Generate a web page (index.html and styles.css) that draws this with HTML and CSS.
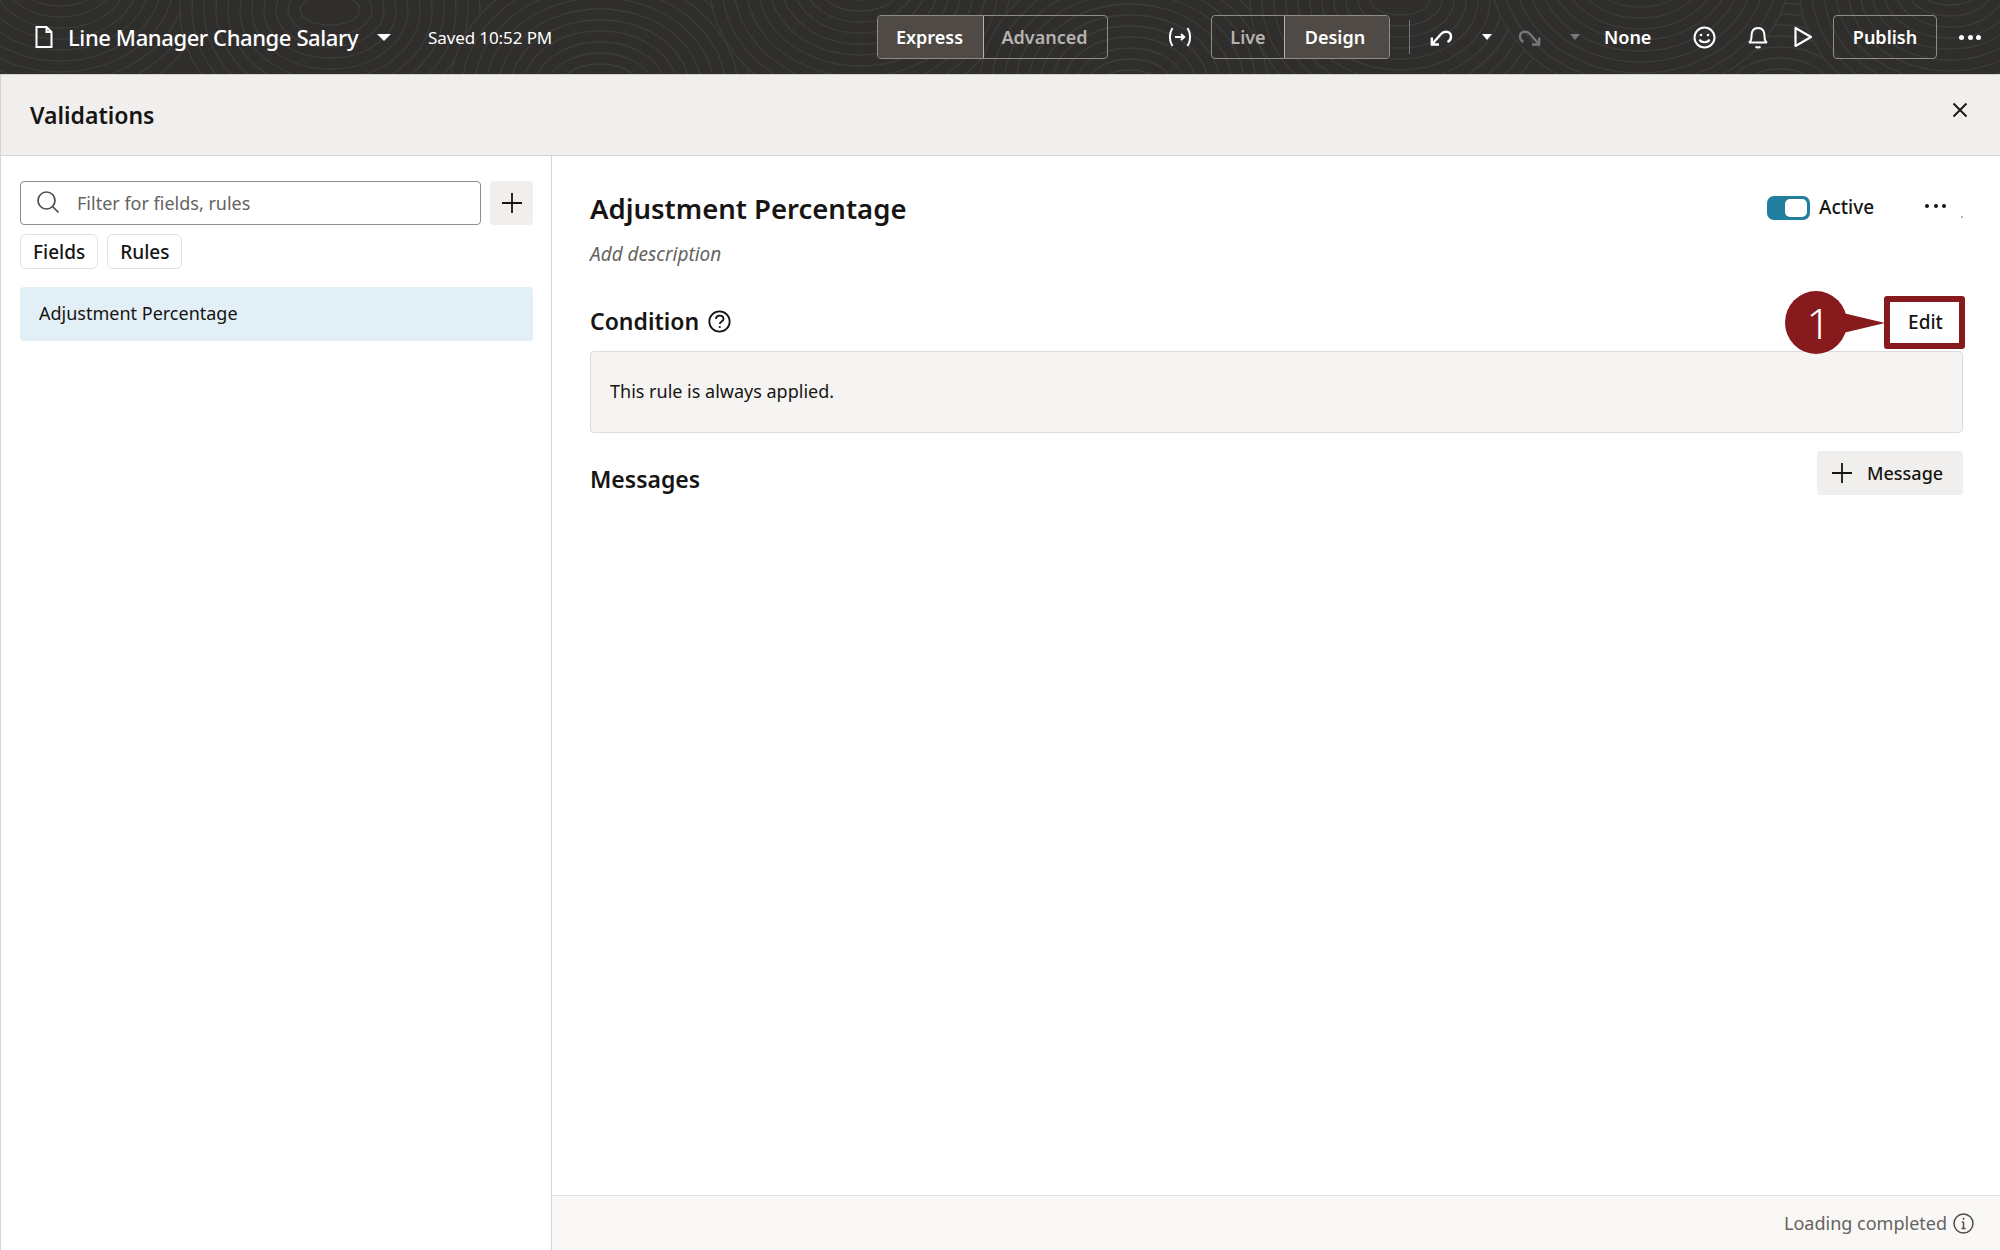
FILE: index.html
```html
<!DOCTYPE html>
<html lang="en">
<head>
  <meta charset="UTF-8" />
  <title>Line Manager Change Salary - Validations</title>
  <link rel="stylesheet" href="styles.css">
</head>
<body>
  <header class="topbar">
    <svg class="topbar-bg" width="2000" height="74" aria-hidden="true">
      <defs>
        <g id="whorl" fill="#2f2e2c" stroke="#3d3c3a" stroke-width="1.300">
          <ellipse rx="150" ry="125"/><ellipse rx="138" ry="114"/><ellipse rx="126" ry="103"/><ellipse rx="114" ry="92"/>
          <ellipse rx="102" ry="81"/><ellipse rx="90" ry="70"/><ellipse rx="78" ry="59"/><ellipse rx="66" ry="48"/>
          <ellipse rx="54" ry="37"/><ellipse rx="42" ry="26"/><ellipse rx="30" ry="15"/>
        </g>
      </defs>
      <use href="#whorl" x="60" y="-20"/>
      <use href="#whorl" x="1780" y="95"/>
      <use href="#whorl" x="330" y="10"/>
      <use href="#whorl" x="600" y="90"/>
      <use href="#whorl" x="860" y="-15"/>
      <use href="#whorl" x="1130" y="85"/>
      <use href="#whorl" x="1400" y="0"/>
      <use href="#whorl" x="1640" y="-30"/>
      <use href="#whorl" x="1950" y="-10"/>
    </svg>

    <svg class="doc-icon" width="18" height="22" viewBox="0 0 18 22" fill="none" stroke="#fff" stroke-width="2"><path d="M1.500 1h10l5 5v15h-15zM11.500 1v5h5"/></svg>
    <span class="app-title">Line Manager Change Salary</span>
    <span class="caret title-caret"></span>
    <span class="saved">Saved 10:52 PM</span>

    <div class="seg seg-mode">
      <span class="seg-item on w-express">Express</span>
      <span class="seg-item w-advanced">Advanced</span>
    </div>

    <svg class="var-icon" width="24" height="22" viewBox="0 0 24 22" fill="none" stroke="#fff" stroke-width="2"><path d="M4.500 2C1 7 1 15 4.500 20M19.500 2c3.500 5 3.500 13 0 18M7 11h9M13 8l3.200 3-3.200 3"/></svg>

    <div class="seg seg-view">
      <span class="seg-item w-live">Live</span>
      <span class="seg-item on w-design">Design</span>
    </div>

    <span class="divider"></span>

    <svg class="undo-icon" width="23" height="17" viewBox="0 0 23 17" fill="none" stroke="#fff" stroke-width="2.400"><path d="M9 15.500H1.800V8.500M1.800 15.500L11 5c3.500-3.800 10-2.500 10 2.500 0 2.500-1.500 4.500-3.500 5.500"/></svg>
    <span class="caret undo-caret"></span>
    <svg class="redo-icon" width="23" height="17" viewBox="0 0 23 17" fill="none" stroke="#77767a" stroke-width="2.400"><path d="M14 15.500h7.200V8.500M21.200 15.500L12 5C8.500 1.200 2 2.500 2 7.500c0 2.500 1.500 4.500 3.500 5.500"/></svg>
    <span class="caret redo-caret"></span>

    <span class="none-label">None</span>

    <svg class="smile-icon" width="23" height="23" viewBox="0 0 23 23" fill="none" stroke="#fff" stroke-width="2"><circle cx="11.500" cy="11.500" r="10"/><path d="M6.500 13.500c1.500 3.500 8.500 3.500 10 0"/><circle cx="8" cy="9" r="1.300" fill="#fff" stroke="none"/><circle cx="15" cy="9" r="1.300" fill="#fff" stroke="none"/></svg>
    <svg class="bell-icon" width="20" height="23" viewBox="0 0 20 23" fill="none" stroke="#fff" stroke-width="2"><path d="M1 16.500c2-1 2.500-3 2.500-6.500 0-5 2.500-8 6.500-8s6.500 3 6.500 8c0 3.500.5 5.500 2.500 6.500zM7.500 20.500c1.500 1.200 3.500 1.200 5 0"/></svg>
    <svg class="play-icon" width="19" height="22" viewBox="0 0 19 22" fill="none" stroke="#fff" stroke-width="2.200"><path d="M1.500 2v18L17 11z" stroke-linejoin="round"/></svg>

    <span class="publish">Publish</span>
    <span class="dots dots-light"><i></i><i></i><i></i></span>
  </header>

  <div class="subheader">
    <h1>Validations</h1>
    <svg class="close-icon" width="16" height="16" viewBox="0 0 16 16" stroke="#161513" stroke-width="1.800"><path d="M1.500 1.500l13 13M14.500 1.500l-13 13"/></svg>
  </div>

  <div class="content">
    <aside class="sidebar">
      <div class="search-row">
        <div class="search">
          <svg width="24" height="24" viewBox="0 0 24 24" fill="none" stroke="#4f4d4a" stroke-width="1.700"><circle cx="10.500" cy="10.500" r="8.500"/><path d="M16.500 16.500l6 6"/></svg>
          <span>Filter for fields, rules</span>
        </div>
        <span class="add-btn">
          <svg width="22" height="22" viewBox="0 0 22 22" stroke="#161513" stroke-width="1.800"><path d="M11 1v20M1 11h20"/></svg>
        </span>
      </div>
      <div class="chips">
        <span class="chip">Fields</span>
        <span class="chip">Rules</span>
      </div>
      <div class="rule-item">Adjustment Percentage</div>
    </aside>

    <main class="detail">
      <div class="detail-body">
        <div class="title-row">
          <h2>Adjustment Percentage</h2>
          <span class="toggle"><i></i></span>
          <span class="active-label">Active</span>
          <span class="dots"><i></i><i></i><i></i></span>
        </div>
        <p class="add-desc">Add description</p>

        <div class="condition-row">
          <h3>Condition</h3>
          <svg class="help-icon" width="23" height="23" viewBox="0 0 23 23" fill="none" stroke="#161513" stroke-width="1.800"><circle cx="11.500" cy="11.500" r="10.200"/><path d="M8 9c0-4.500 7.500-4.500 7.500 0 0 2.500-3.700 2.500-3.700 5"/><circle cx="11.800" cy="17" r="1.100" fill="#161513" stroke="none"/></svg>
          <span class="edit-btn">Edit</span>
          <span class="callout">
            <span class="callout-num">1</span>
            <svg class="callout-tail" width="42" height="24" viewBox="0 0 42 24"><path d="M0 2l42 10-42 10z" fill="#861a1c"/></svg>
          </span>
        </div>

        <div class="condition-box">This rule is always applied.</div>

        <div class="messages-row">
          <h3>Messages</h3>
          <span class="message-btn">
            <svg width="22" height="22" viewBox="0 0 22 22" stroke="#161513" stroke-width="1.800"><path d="M11 1v20M1 11h20"/></svg>
            Message
          </span>
        </div>
      </div>

      <footer class="status">
        <span>Loading completed</span>
        <svg width="21" height="21" viewBox="0 0 21 21" fill="none" stroke="#4f4d4a" stroke-width="1.500"><circle cx="10.500" cy="10.500" r="9.500"/><path d="M10.500 9v6.500M8.500 15.500h4M8.800 9h1.700"/><circle cx="10.500" cy="5.800" r="1" fill="#4f4d4a" stroke="none"/></svg>
      </footer>
    </main>
  </div>
</body>
</html>
```

FILE: styles.css
```css
* { box-sizing: border-box; }
html, body { margin: 0; height: 100%; }
body { width: 2000px; height: 1250px; display: flex; flex-direction: column; overflow: hidden; background: #fff; color: #161513; font-family: "Noto Sans", "Open Sans", sans-serif; }
h1, h2, h3, p { margin: 0; }

/* top bar */
.topbar { position: relative; flex: none; height: 75px; display: flex; align-items: center; padding-left: 34px; background: #2f2e2c; border-bottom: 1px solid #d6d4d1; color: #fff; overflow: hidden; }
.topbar > * { position: relative; flex: none; }
.topbar > .topbar-bg { position: absolute; left: 0; top: 0; }
.doc-icon { margin-left: 1px; }
.app-title { margin-left: 15px; width: 292px; font-size: 22px; font-weight: 500; letter-spacing: -0.4px; white-space: nowrap; }
.caret { width: 0; height: 0; border-left: 5.500px solid transparent; border-right: 5.500px solid transparent; border-top: 6px solid #fff; }
.title-caret { margin-left: 17px; border-left-width: 7px; border-right-width: 7px; border-top-width: 7px; }
.saved { margin-left: 37px; width: 126px; font-size: 17px; letter-spacing: -0.1px; white-space: nowrap; }
.seg { display: flex; height: 44px; border: 1px solid #8f8d89; border-radius: 4px; overflow: hidden; font-size: 18px; font-weight: 600; color: #b5b3af; }
.seg-item { display: flex; align-items: center; justify-content: center; }
.seg-item.on { background: #4f4a45; color: #fff; }
.seg-mode { margin-left: 323px; width: 231px; }
.seg-mode .on { border-right: 1px solid #b5b3af; }
.w-express { width: 106px; padding-right: 2px; }
.w-advanced { width: 123px; padding-right: 2px; }
.var-icon { margin-left: 60px; }
.seg-view { margin-left: 19px; width: 179px; }
.seg-view .on { border-left: 1px solid #b5b3af; }
.w-live { width: 72px; }
.w-design { width: 105px; padding-right: 4px; }
.divider { margin-left: 19px; width: 1px; height: 34px; background: #77767a; }
.undo-icon { margin-left: 20px; }
.undo-caret { margin-left: 29px; }
.redo-icon { margin-left: 26px; }
.redo-caret { margin-left: 29px; border-top-color: #77767a; }
.none-label { margin-left: 24px; width: 48px; font-size: 18px; font-weight: 600; }
.smile-icon { margin-left: 41px; }
.bell-icon { margin-left: 32px; }
.play-icon { margin-left: 26px; }
.publish { margin-left: 20px; width: 104px; height: 44px; display: flex; align-items: center; justify-content: center; border: 1px solid #8f8d89; border-radius: 4px; font-size: 18px; font-weight: 600; }
.dots { display: flex; gap: 4.500px; }
.dots i { width: 4px; height: 4px; border-radius: 50%; background: #161513; }
.dots-light { margin-left: 22px; gap: 3.500px; }
.dots-light i { width: 5px; height: 5px; background: #fff; }

/* validations header */
.subheader { flex: none; height: 81px; display: flex; align-items: center; justify-content: space-between; padding: 0 33px 10px 29px; background: #f1efed; border: solid #d6d4d1; border-width: 0 0 1px 1px; }
.subheader h1 { font-size: 23px; font-weight: 600; padding-top: 10px; }
.close-icon { margin-bottom: 1px; margin-right: -1px; }

.content { flex: 1; display: flex; min-height: 0; }

/* left list */
.sidebar { flex: none; width: 552px; padding: 25px 18px 0 19px; border: solid #d6d4d1; border-width: 0 1px 0 1px; }
.search-row { display: flex; gap: 9px; }
.search { width: 462px; height: 44px; display: flex; align-items: center; gap: 17px; padding-left: 15px; border: 1px solid #8f8d89; border-radius: 4px; font-size: 18px; color: #65635f; }
.search svg { margin-top: -3px; }
.add-btn { width: 43px; height: 44px; display: flex; align-items: center; justify-content: center; background: #f1efed; border-radius: 4px; }
.chips { display: flex; gap: 9px; margin-top: 9px; }
.chip { height: 35px; padding: 0 12px; display: flex; align-items: center; border: 1px solid #e4e2df; border-radius: 6px; font-size: 19px; font-weight: 500; }
.rule-item { margin-top: 18px; height: 54px; display: flex; align-items: center; padding-left: 19px; padding-bottom: 2px; background: #e3eff6; border-radius: 4px; font-size: 18px; }

/* right detail */
.detail { flex: 1; display: flex; flex-direction: column; min-width: 0; }
.detail-body { flex: 1; padding: 31px 37px 0 38px; }
.title-row { position: relative; display: flex; align-items: center; height: 44px; }
.title-row::after { content: ""; position: absolute; right: 0; top: 29px; width: 2px; height: 2px; background: #b5b3af; }
.title-row h2 { font-size: 27.500px; font-weight: 600; flex: 1; margin-top: -2px; }
.toggle { width: 43px; height: 24px; padding: 3px; display: flex; justify-content: flex-end; background: #227e9e; border-radius: 7px; margin-top: -3px; }
.toggle i { width: 22px; height: 18px; background: #fff; border-radius: 5px; }
.active-label { margin-left: 9px; width: 106px; font-size: 19px; font-weight: 500; margin-top: -4px; }
.title-row .dots { margin-right: 17px; margin-top: -6px; }
.add-desc { margin-top: 10px; font-size: 19px; font-style: italic; color: #65635f; }
.condition-row { position: relative; display: flex; align-items: center; gap: 9px; margin-top: 35px; height: 38px; }
.condition-row h3, .messages-row h3 { font-size: 23px; font-weight: 600; }
.edit-btn { position: absolute; right: -2px; top: -6px; width: 81px; height: 53px; display: flex; align-items: center; justify-content: center; padding: 0 0 2px 2px; background: #fff; border: 6px solid #861a1c; border-radius: 3px; font-size: 19px; font-weight: 500; }
.callout { position: absolute; right: 78px; top: -11px; display: flex; align-items: center; }
.callout-num { width: 62px; height: 63px; display: flex; align-items: center; justify-content: center; padding-left: 5px; background: #861a1c; border-radius: 50%; color: #fff; font-size: 42px; font-weight: 300; }
.callout-tail { margin-left: -4px; }
.condition-box { margin-top: 11px; height: 82px; display: flex; align-items: center; padding: 0 0 2px 19px; background: #f5f4f2; border: 1px solid #dedcd9; border-radius: 4px; font-size: 18px; }
.messages-row { display: flex; align-items: center; justify-content: space-between; margin-top: 18px; height: 44px; }
.messages-row h3 { padding-top: 11px; }
.message-btn { display: flex; align-items: center; gap: 14px; width: 146px; height: 44px; padding-left: 14px; background: #f1efed; border-radius: 4px; font-size: 18px; font-weight: 500; }
.status { flex: none; height: 55px; display: flex; align-items: center; justify-content: flex-end; gap: 6px; padding-right: 26px; background: #f9f8f7; border-top: 1px solid #e4e2df; font-size: 18px; color: #65635f; }
```
